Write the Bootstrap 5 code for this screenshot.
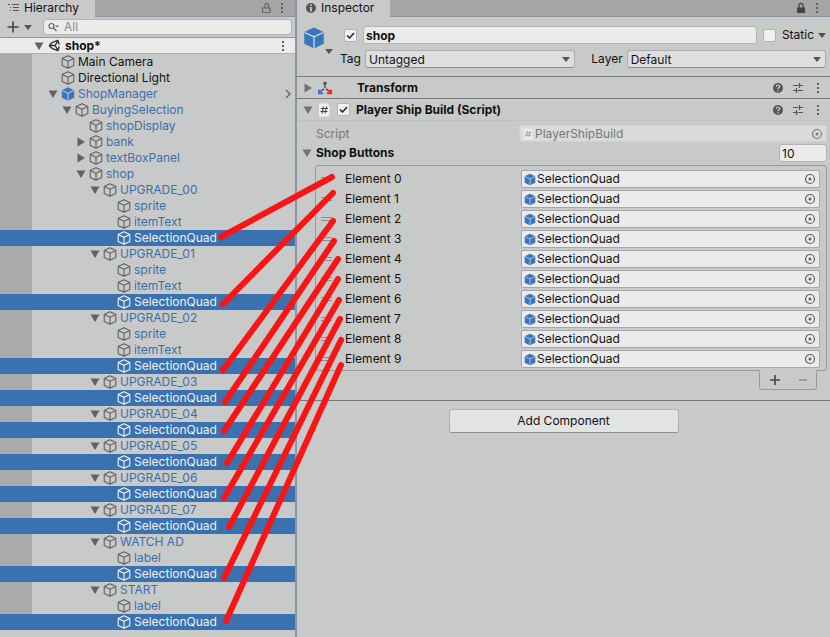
<!DOCTYPE html>
<html lang="en">
<head>
<meta charset="utf-8">
<meta name="viewport" content="width=device-width, initial-scale=1">
<title>Hierarchy and Inspector</title>
<link href="https://cdn.jsdelivr.net/npm/bootstrap@5.3.0/dist/css/bootstrap.min.css" rel="stylesheet">
<style>
  :root { --panel: #c8cac9; --strip: #a5a5a8; --field: #ebebeb; --pick: #3a72b0; --ink: #111; --icon: #626064; --edge: #868c98; }
  body { font: 12px/16px Inter, "Open Sans", sans-serif; color: var(--ink); background: var(--panel); }
  svg { display: block; flex: none; }
  button.plain { border: 0; padding: 0; background: none; color: var(--icon); display: block; flex: none; }
  .hierarchy { width: 295px; flex: none; }
  .inspector { min-width: 0; border-left: 2px solid #8e95a3; }
  .tabstrip { height: 17px; background: var(--strip); border-bottom: 1px solid #8a94a3; padding-right: 11px; }
  .tabstrip .dock-tab { height: 17px; background: var(--panel); }
  .tools { height: 21px; padding: 2px 3px 2px 6px; border-bottom: 1px solid #93969b; }
  .search { height: 16px; margin-left: 11px; background: var(--field); border: 1px solid #b4b4b6; border-radius: 4px; }
  .search input { border: 0; background: none; padding: 0; min-width: 0; line-height: 14px; outline: 0; }
  .search input::placeholder { color: #8d8d90; opacity: 1; }
  .scene { height: 16px; background: var(--field); padding: 0 10px 0 34px; border-bottom: 1px solid #b0b2b3; }
  .scene .fold { color: #8290a0; }
  .tree { background: linear-gradient(to right, #aca9ab 32px, transparent 32px); }
  .tree li { display: flex; align-items: center; height: 16px; gap: 3px; color: #3a6fae; padding-right: 4px; }
  .tree li > svg { color: var(--icon); }
  .tree li.own { color: var(--ink); }
  .tree li a { color: inherit; text-decoration: none; white-space: nowrap; }
  .tree li.picked { background: var(--pick); color: #f0f0f0; }
  .tree li.picked > svg { color: #f4f4f4; }
  .in1 { padding-left: 61px; } .in2 { padding-left: 75px; } .in3 { padding-left: 89px; }
  .in4 { padding-left: 103px; } .in5 { padding-left: 117px; }
  .tree .twist { width: 10px; margin-left: -13px; }
  .object-head { padding: 9px 4px 8px 6px; border-bottom: 1px solid #77797f; }
  .object-icon { margin-right: 7px; }
  .object-icon .more { padding-top: 23px; }
  .object-line { gap: 6px; padding-left: 4px; margin-bottom: 6px; }
  .tick { appearance: none; width: 13px; height: 13px; margin: 0; flex: none; background: #f0f0f0; border: 1px solid #b4b4b6; border-radius: 2px; }
  .tick:checked { background: #f0f0f0 url("data:image/svg+xml,%3Csvg xmlns='http://www.w3.org/2000/svg' viewBox='0 0 11 11'%3E%3Cpath d='M2 5.5l2.5 2.5L9 3' fill='none' stroke='%23222' stroke-width='1.5'/%3E%3C/svg%3E"); }
  .box { height: 18px; min-width: 0; background: var(--field); border: 1px solid #b2b3b5; border-radius: 3px; padding: 0 2px; color: var(--ink); line-height: 16px; }
  .count { width: 48px; }
  .pick-list { position: relative; min-width: 0; }
  .pick-list select { appearance: none; width: 100%; height: 18px; padding: 0 18px 0 3px; background: #dededf; border: 1px solid #aaacaf; border-bottom-color: #868c98; border-radius: 3px; color: var(--ink); line-height: 15px; display: block; }
  .pick-list svg { position: absolute; right: 5px; top: 7px; pointer-events: none; }
  .tag-pick { flex: 210 1 0; } .layer-pick { flex: 199 1 0; }
  .bar { height: 22px; padding: 0 10px 0 6px; border-bottom: 1px solid #77797f; }
  .bar.open { border-bottom-color: #c0c1c1; }
  .bar .tick { margin: 0 6px; }
  .fold { color: #737177 !important; }
  .props { padding: 4px 3px 0 5px; }
  .slot { height: 18px; background: var(--field); border: 1px solid #a5a7aa; border-radius: 2px; padding: 0 3px 0 2px; gap: 1px; min-width: 0; line-height: 16px; }
  .slot.off { background: #d9dada; border-color: #d0d1d1; color: #77777b; height: 17px; line-height: 15px; }
  .script-row { padding-left: 14px; margin-bottom: 2px; }
  .script-label { width: 203px; color: #77777b; }
  .count-row { margin-bottom: 3px; }
  .items { margin-left: 13px; border: 1px solid #979ba3; border-radius: 3px; padding: 3px 6px 1px 5px; }
  .items li { height: 20px; }
  .items .name { width: 176px; flex: none; }
  .items .grip { width: 24px; flex: none; color: var(--edge); }
  .resize { width: 58px; height: 20px; margin: -1px 10px 0 auto; border: 1px solid #979ba3; border-top-color: var(--panel); border-radius: 0 0 3px 3px; }
  .add-row { margin-top: 10px; padding-top: 8px; border-top: 1px solid #77797f; }
  .add { width: 230px; height: 24px; background: #e2e3e3; border: 1px solid #aeb0b2; border-bottom-color: #8a8f99; border-radius: 3px; color: var(--ink); }
  .marks { position: absolute; left: 0; top: 0; pointer-events: none; }
</style>
<script src="https://cdn.jsdelivr.net/npm/bootstrap@5.3.0/dist/js/bootstrap.bundle.min.js"></script>
</head>
<body>
<svg width="0" height="0" class="position-absolute" aria-hidden="true">
  <symbol id="cube" viewBox="0 0 14 14"><path d="M7 .8l5.800 2.800v6.800L7 13.300 1.200 10.400V3.600zM1.200 3.600L7 6.300l5.800-2.700M7 6.300v7" fill="none" stroke="currentColor" stroke-width="1.100" stroke-linejoin="round"/></symbol>
  <symbol id="solid" viewBox="0 0 14 14"><path d="M7 .3l6.200 2.900v7.500L7 13.700.8 10.700V3.200z" fill="#3a76bd"/><path d="M1 3.500l6 2.700 6-2.700M7 6.200v7.300" fill="none" stroke="#d5e0ea" stroke-width=".8"/></symbol>
  <symbol id="down" viewBox="0 0 10 10"><path d="M.5 1.500h9L5 9z" fill="currentColor"/></symbol>
  <symbol id="right" viewBox="0 0 10 10"><path d="M1.500 .5v9L9 5z" fill="currentColor"/></symbol>
  <symbol id="caret" viewBox="0 0 8 5"><path d="M0 0h8L4 5z" fill="#555358"/></symbol>
  <symbol id="dots" viewBox="0 0 4 12"><path d="M1 1h2v2H1zM1 5h2v2H1zM1 9h2v2H1z" fill="#626064"/></symbol>
  <symbol id="target" viewBox="0 0 12 12"><circle cx="6" cy="6" r="4.500" fill="none" stroke="currentColor" stroke-width="1.200"/><circle cx="6" cy="6" r="1.500" fill="currentColor"/></symbol>
  <symbol id="help" viewBox="0 0 12 12"><circle cx="6" cy="6" r="5" fill="#57555a"/><path d="M4.300 4.700Q4.500 3 6 3t1.700 1.500Q7.700 5.400 6 6.200V7.200M6 8.200v1.200" fill="none" stroke="#d0d0d0" stroke-width="1.200"/></symbol>
  <symbol id="preset" viewBox="0 0 12 12"><path d="M1 3.500h5.500M8 3.500h3M7.500 1v5M1 8.500h3M5.500 8.500H11M4.500 6v5" fill="none" stroke="#57555a" stroke-width="1.200"/></symbol>
  <symbol id="grip" viewBox="0 0 12 6"><path d="M0 1.500h11M0 4.500h11" stroke="currentColor"/></symbol>
</svg>

<div class="d-flex min-vh-100">
  <aside class="hierarchy" aria-label="Hierarchy">
    <div class="tabstrip d-flex align-items-center">
      <div class="dock-tab d-flex align-items-center gap-1 ps-2 pe-3 me-auto">
        <svg width="12" height="12" viewBox="0 0 12 12"><path d="M0 2.500h2M4 2.500h7M2 5.500h1M5 5.500h6M2 8.500h1M5 8.500h6" stroke="#57555a"/></svg>
        <span>Hierarchy</span>
      </div>
      <button class="plain me-2" aria-label="Lock"><svg width="12" height="12" viewBox="0 0 12 12"><path d="M2.500 6h7.500v4.500H2.500zM5 6V3Q5 1.500 6.800 1.500T8.500 3v3" fill="none" stroke="#656369" stroke-width="1.200"/></svg></button>
      <button class="plain" aria-label="Menu"><svg width="4" height="12"><use href="#dots"/></svg></button>
    </div>
    <div class="tools d-flex align-items-center">
      <button class="plain" aria-label="Create"><svg width="14" height="14" viewBox="0 0 14 14"><path d="M7 1.500v11M1.500 7h11" stroke="#454348" stroke-width="1.600"/></svg></button>
      <button class="plain ms-1" aria-label="Create options"><svg width="8" height="5"><use href="#caret"/></svg></button>
      <label class="search d-flex align-items-center flex-grow-1 ps-1 gap-1">
        <svg width="12" height="10" viewBox="0 0 12 10"><circle cx="3.500" cy="4" r="2.500" fill="none" stroke="#626064" stroke-width="1.200"/><path d="M5.500 6l3 3" stroke="#626064" stroke-width="1.300"/><path d="M7 3.500h4L9 5.500z" fill="#626064"/></svg>
        <input class="flex-grow-1" type="text" placeholder="All" aria-label="Search hierarchy">
      </label>
    </div>
    <div class="scene d-flex align-items-center">
      <button class="plain" aria-label="Collapse scene"><svg width="10" height="10"><use href="#down"/></svg></button>
      <svg class="ms-1" width="13" height="13" viewBox="0 0 13 13"><path d="M4.500 3.300L9.800 1.300l1.400 4.200M1.200 6.500l3.300-3.200M1.200 6.500l3.300 3.200 5.300 2 1.400-4.200M1.200 6.500h6M10 1.500L7.200 6.500l2.800 5" fill="none" stroke="#333" stroke-width="1.400" stroke-linejoin="round"/></svg>
      <strong class="ms-1 me-auto">shop*</strong>
      <button class="plain" aria-label="Scene menu"><svg width="4" height="12"><use href="#dots"/></svg></button>
    </div>
    <ul class="tree list-unstyled mb-0">
      <li class="in1 own"><svg width="14" height="14"><use href="#cube"/></svg><a href="#">Main Camera</a></li>
      <li class="in1 own"><svg width="14" height="14"><use href="#cube"/></svg><a href="#">Directional Light</a></li>
      <li class="in1"><button class="plain twist" aria-label="Collapse"><svg width="10" height="10"><use href="#down"/></svg></button><svg width="14" height="14"><use href="#solid"/></svg><a href="#">ShopManager</a><button class="plain ms-auto" aria-label="Open prefab"><svg width="6" height="10" viewBox="0 0 6 10"><path d="M1 1l4 4-4 4" fill="none" stroke="currentColor" stroke-width="1.300"/></svg></button></li>
      <li class="in2"><button class="plain twist" aria-label="Collapse"><svg width="10" height="10"><use href="#down"/></svg></button><svg width="14" height="14"><use href="#cube"/></svg><a href="#">BuyingSelection</a></li>
      <li class="in3"><svg width="14" height="14"><use href="#cube"/></svg><a href="#">shopDisplay</a></li>
      <li class="in3"><button class="plain twist" aria-label="Expand"><svg width="10" height="10"><use href="#right"/></svg></button><svg width="14" height="14"><use href="#cube"/></svg><a href="#">bank</a></li>
      <li class="in3"><button class="plain twist" aria-label="Expand"><svg width="10" height="10"><use href="#right"/></svg></button><svg width="14" height="14"><use href="#cube"/></svg><a href="#">textBoxPanel</a></li>
      <li class="in3"><button class="plain twist" aria-label="Collapse"><svg width="10" height="10"><use href="#down"/></svg></button><svg width="14" height="14"><use href="#cube"/></svg><a href="#">shop</a></li>
      <li class="in4"><button class="plain twist" aria-label="Collapse"><svg width="10" height="10"><use href="#down"/></svg></button><svg width="14" height="14"><use href="#cube"/></svg><a href="#">UPGRADE_00</a></li>
      <li class="in5"><svg width="14" height="14"><use href="#cube"/></svg><a href="#">sprite</a></li>
      <li class="in5"><svg width="14" height="14"><use href="#cube"/></svg><a href="#">itemText</a></li>
      <li class="in5 picked"><svg width="14" height="14"><use href="#cube"/></svg><a href="#">SelectionQuad</a></li>
      <li class="in4"><button class="plain twist" aria-label="Collapse"><svg width="10" height="10"><use href="#down"/></svg></button><svg width="14" height="14"><use href="#cube"/></svg><a href="#">UPGRADE_01</a></li>
      <li class="in5"><svg width="14" height="14"><use href="#cube"/></svg><a href="#">sprite</a></li>
      <li class="in5"><svg width="14" height="14"><use href="#cube"/></svg><a href="#">itemText</a></li>
      <li class="in5 picked"><svg width="14" height="14"><use href="#cube"/></svg><a href="#">SelectionQuad</a></li>
      <li class="in4"><button class="plain twist" aria-label="Collapse"><svg width="10" height="10"><use href="#down"/></svg></button><svg width="14" height="14"><use href="#cube"/></svg><a href="#">UPGRADE_02</a></li>
      <li class="in5"><svg width="14" height="14"><use href="#cube"/></svg><a href="#">sprite</a></li>
      <li class="in5"><svg width="14" height="14"><use href="#cube"/></svg><a href="#">itemText</a></li>
      <li class="in5 picked"><svg width="14" height="14"><use href="#cube"/></svg><a href="#">SelectionQuad</a></li>
      <li class="in4"><button class="plain twist" aria-label="Collapse"><svg width="10" height="10"><use href="#down"/></svg></button><svg width="14" height="14"><use href="#cube"/></svg><a href="#">UPGRADE_03</a></li>
      <li class="in5 picked"><svg width="14" height="14"><use href="#cube"/></svg><a href="#">SelectionQuad</a></li>
      <li class="in4"><button class="plain twist" aria-label="Collapse"><svg width="10" height="10"><use href="#down"/></svg></button><svg width="14" height="14"><use href="#cube"/></svg><a href="#">UPGRADE_04</a></li>
      <li class="in5 picked"><svg width="14" height="14"><use href="#cube"/></svg><a href="#">SelectionQuad</a></li>
      <li class="in4"><button class="plain twist" aria-label="Collapse"><svg width="10" height="10"><use href="#down"/></svg></button><svg width="14" height="14"><use href="#cube"/></svg><a href="#">UPGRADE_05</a></li>
      <li class="in5 picked"><svg width="14" height="14"><use href="#cube"/></svg><a href="#">SelectionQuad</a></li>
      <li class="in4"><button class="plain twist" aria-label="Collapse"><svg width="10" height="10"><use href="#down"/></svg></button><svg width="14" height="14"><use href="#cube"/></svg><a href="#">UPGRADE_06</a></li>
      <li class="in5 picked"><svg width="14" height="14"><use href="#cube"/></svg><a href="#">SelectionQuad</a></li>
      <li class="in4"><button class="plain twist" aria-label="Collapse"><svg width="10" height="10"><use href="#down"/></svg></button><svg width="14" height="14"><use href="#cube"/></svg><a href="#">UPGRADE_07</a></li>
      <li class="in5 picked"><svg width="14" height="14"><use href="#cube"/></svg><a href="#">SelectionQuad</a></li>
      <li class="in4"><button class="plain twist" aria-label="Collapse"><svg width="10" height="10"><use href="#down"/></svg></button><svg width="14" height="14"><use href="#cube"/></svg><a href="#">WATCH AD</a></li>
      <li class="in5"><svg width="14" height="14"><use href="#cube"/></svg><a href="#">label</a></li>
      <li class="in5 picked"><svg width="14" height="14"><use href="#cube"/></svg><a href="#">SelectionQuad</a></li>
      <li class="in4"><button class="plain twist" aria-label="Collapse"><svg width="10" height="10"><use href="#down"/></svg></button><svg width="14" height="14"><use href="#cube"/></svg><a href="#">START</a></li>
      <li class="in5"><svg width="14" height="14"><use href="#cube"/></svg><a href="#">label</a></li>
      <li class="in5 picked"><svg width="14" height="14"><use href="#cube"/></svg><a href="#">SelectionQuad</a></li>
    </ul>
  </aside>

  <main class="inspector flex-grow-1" aria-label="Inspector">
    <div class="tabstrip d-flex align-items-center">
      <div class="dock-tab d-flex align-items-center gap-1 ps-2 pe-3 me-auto">
        <svg width="12" height="12" viewBox="0 0 12 12"><circle cx="6" cy="6" r="5" fill="#57555a"/><path d="M6 2.500v1.500M6 5v4.500" stroke="#d8d8d8" stroke-width="1.600"/></svg>
        <span>Inspector</span>
      </div>
      <button class="plain me-2" aria-label="Lock"><svg width="12" height="12" viewBox="0 0 12 12"><path d="M2 5.500h8V11H2z" fill="#454348"/><path d="M4 6V3.500Q4 1.500 6 1.500T8 3.500V6" fill="none" stroke="#454348" stroke-width="1.300"/></svg></button>
      <button class="plain" aria-label="Menu"><svg width="4" height="12"><use href="#dots"/></svg></button>
    </div>

    <div class="object-head d-flex">
      <div class="object-icon d-flex align-items-start">
        <svg width="22" height="24"><use href="#solid"/></svg>
        <button class="plain more" aria-label="Icon options"><svg width="8" height="5"><use href="#caret"/></svg></button>
      </div>
      <div class="flex-grow-1">
        <div class="object-line d-flex align-items-center">
          <input class="tick" type="checkbox" checked aria-label="Active">
          <input class="box flex-grow-1 fw-bold" type="text" value="shop" aria-label="Object name">
          <input class="tick" type="checkbox" id="static">
          <div class="d-flex align-items-center gap-1">
            <label for="static">Static</label>
            <button class="plain" aria-label="Static options"><svg width="8" height="5"><use href="#caret"/></svg></button>
          </div>
        </div>
        <div class="d-flex align-items-center gap-1">
          <label for="tag">Tag</label>
          <div class="pick-list tag-pick"><select id="tag"><option>Untagged</option></select><svg width="8" height="5"><use href="#caret"/></svg></div>
          <label class="ms-2 ps-1" for="layer">Layer</label>
          <div class="pick-list layer-pick"><select id="layer"><option>Default</option></select><svg width="8" height="5"><use href="#caret"/></svg></div>
        </div>
      </div>
    </div>

    <div class="bar d-flex align-items-center">
      <button class="plain fold me-1" aria-label="Expand Transform"><svg width="10" height="10"><use href="#right"/></svg></button>
      <svg width="16" height="14" viewBox="0 0 16 14"><path d="M8 7V3" stroke="#57555a" stroke-width="1.500"/><circle cx="8" cy="2.200" r="1.700" fill="#57555a"/><path d="M7 8L3 10.500M2 8.800v3.500h4" stroke="#3a76bd" stroke-width="2" fill="none"/><path d="M9 8l4 2.500M14 8.800v3.500h-4" stroke="#ee2222" stroke-width="2" fill="none"/></svg>
      <strong class="ms-4 me-auto">Transform</strong>
      <div class="d-flex gap-2 align-items-center">
        <button class="plain" aria-label="Help"><svg width="12" height="12"><use href="#help"/></svg></button>
        <button class="plain" aria-label="Presets"><svg width="12" height="12"><use href="#preset"/></svg></button>
        <button class="plain ms-1" aria-label="Menu"><svg width="4" height="12"><use href="#dots"/></svg></button>
      </div>
    </div>
    <div class="bar open d-flex align-items-center">
      <button class="plain fold me-1" aria-label="Collapse script"><svg width="10" height="10"><use href="#down"/></svg></button>
      <svg width="14" height="14" viewBox="0 0 14 14"><path d="M2 .5h8l2.500 2.500v10.500H2z" fill="#f0f0f0"/><path d="M6.500 3.500l-1.500 7M9.500 3.500l-1.500 7M4 5.500h7M3.500 8.500h7" stroke="#444" fill="none"/></svg>
      <input class="tick" type="checkbox" id="enabled" checked>
      <label class="fw-bold me-auto" for="enabled">Player Ship Build (Script)</label>
      <div class="d-flex gap-2 align-items-center">
        <button class="plain" aria-label="Help"><svg width="12" height="12"><use href="#help"/></svg></button>
        <button class="plain" aria-label="Presets"><svg width="12" height="12"><use href="#preset"/></svg></button>
        <button class="plain ms-1" aria-label="Menu"><svg width="4" height="12"><use href="#dots"/></svg></button>
      </div>
    </div>

    <div class="props">
      <div class="script-row d-flex align-items-center">
        <span class="script-label flex-shrink-0">Script</span>
        <div class="slot off d-flex align-items-center flex-grow-1">
          <svg width="12" height="12" viewBox="0 0 14 14"><path d="M2 .5h8l2.500 2.500v10.500H2z" fill="#ececec"/><path d="M6.500 3.500l-1.500 7M9.500 3.500l-1.500 7M4 5.500h7M3.500 8.500h7" stroke="#999" fill="none"/></svg>
          <span class="me-auto">PlayerShipBuild</span>
          <button class="plain opacity-75" aria-label="Choose script" disabled><svg width="12" height="12"><use href="#target"/></svg></button>
        </div>
      </div>
      <div class="count-row d-flex align-items-center">
        <button class="plain fold me-1" aria-label="Collapse Shop Buttons"><svg width="10" height="10"><use href="#down"/></svg></button>
        <label class="fw-bold me-auto" for="count">Shop Buttons</label>
        <input class="box count" id="count" type="text" value="10">
      </div>
      <ul class="items list-unstyled mb-0" id="items"></ul>
      <div class="resize d-flex align-items-center justify-content-around">
        <button class="plain" aria-label="Add element"><svg width="12" height="12" viewBox="0 0 12 12"><path d="M6 1v10M1 6h10" stroke="#454348" stroke-width="1.600"/></svg></button>
        <button class="plain" aria-label="Remove element"><svg width="10" height="12" viewBox="0 0 10 12"><path d="M1 6h8" stroke="#868c98" stroke-width="1.500"/></svg></button>
      </div>
    </div>
    <div class="add-row text-center"><button class="add p-0">Add Component</button></div>
  </main>
</div>

<svg class="marks" width="360" height="637" viewBox="0 0 360 637" aria-hidden="true">
  <path d="M221 237L332 177M223 304L333 193M223 370L333 221M225 402L334 241M224 431L338 259M227 463L338 279M224 498L339 300M229 527L340 319M224 578L341 340M226 621L341 365" fill="none" stroke="#fa1414" stroke-width="6" stroke-linecap="round"/>
</svg>
<script>
  const items = document.getElementById('items');
  for (let i = 0; i < 10; i++) {
    items.insertAdjacentHTML('beforeend', `<li class="d-flex align-items-center">
      <span class="grip"><svg width="12" height="6"><use href="#grip"/></svg></span>
      <span class="name">Element ${i}</span>
      <div class="slot d-flex align-items-center flex-grow-1">
        <svg width="12" height="13"><use href="#solid"/></svg><span class="me-auto">SelectionQuad</span>
        <button class="plain" aria-label="Choose object for element ${i}"><svg width="12" height="12"><use href="#target"/></svg></button>
      </div></li>`);
  }
</script>
</body>
</html>
